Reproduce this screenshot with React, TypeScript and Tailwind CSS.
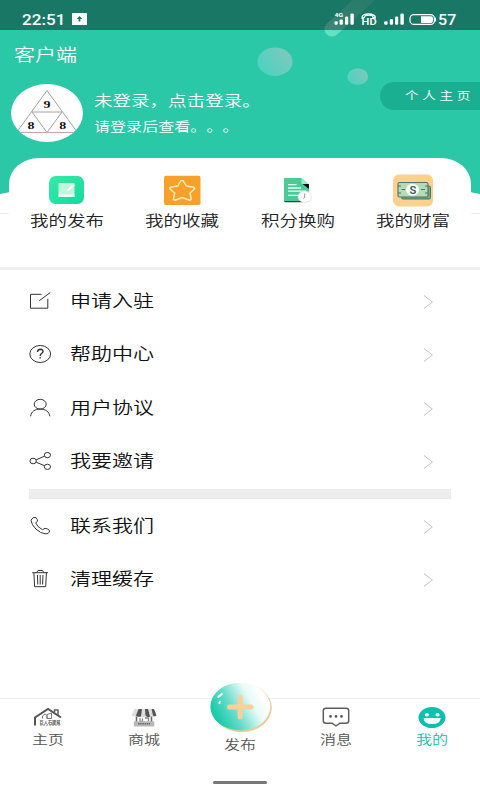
import React from "react";

interface Entry {
  name: string;
  icon: React.ReactNode;
}

function StatusBar() {
  return (
    <div className="relative flex h-[30px] items-center justify-between bg-black/40 pl-[22px] pr-[22px] pt-[8px] text-white">
      <div className="flex items-center">
        <span className="inline-block w-[50px]">
          <span className="relative -top-px inline-block origin-left scale-x-[1.22] font-[Roboto] text-[14px] font-medium leading-[20px]">22:51</span>
        </span>
        <svg width="15" height="12" viewBox="0 0 15 12">
          <rect width="15" height="12" rx="0.6" fill="#fff" />
          <path d="M7.5 3 L10.3 6 H8.4 V8.6 H6.6 V6 H4.7 Z" fill="#1b7864" />
        </svg>
      </div>
      <div className="flex items-center">
        <svg className="relative -top-px" width="104" height="16" viewBox="334 10 104 16" fill="#fff">
          <text x="334.5" y="17" fontSize="6" fontWeight="700" fontFamily="Roboto, sans-serif" textLength="8.5" lengthAdjust="spacingAndGlyphs">4G</text>
          <g>
            <rect x="334.5" y="21.2" width="3.2" height="3.6" rx="1.2" />
            <rect x="339.6" y="19.4" width="3.2" height="5.4" rx="1.2" />
            <rect x="345" y="16.6" width="3.2" height="8.2" rx="1.2" />
            <rect x="350.4" y="13.4" width="3.4" height="11.4" rx="1.2" />
          </g>
          <path d="M362 18 C361 12.4 376 12.4 375.4 18 L373 17.4 L372.6 15.8 C370 14.9 367.4 14.9 365 15.8 L364.4 17.4 Z" fill="none" stroke="#fff" strokeWidth="1.2" />
          <text x="361.6" y="25.2" fontSize="9" fontWeight="600" fontFamily="Roboto, sans-serif" textLength="15" lengthAdjust="spacingAndGlyphs">HD</text>
          <g>
            <rect x="384.2" y="21.2" width="3.4" height="3.6" rx="1.2" />
            <rect x="389.8" y="19" width="3.2" height="5.8" rx="1.2" />
            <rect x="395" y="16.6" width="3.2" height="8.2" rx="1.2" />
            <rect x="400.4" y="13.4" width="3.4" height="11.4" rx="1.2" />
          </g>
          <rect x="410" y="14.6" width="24.5" height="9.8" rx="4" fill="none" stroke="#fff" strokeWidth="1.2" />
          <path d="M421 16.2 H431 Q433.2 16.2 433.2 19.5 Q433.2 22.9 431 22.9 H421 Z" />
          <rect x="434.8" y="17.5" width="1.2" height="4" rx="0.6" />
        </svg>
        <span className="inline-block w-[20px]">
          <span className="relative -top-px inline-block origin-left scale-x-[1.15] font-[Roboto] text-[14px] font-medium leading-[20px]">57</span>
        </span>
      </div>
    </div>
  );
}

function Bubbles() {
  return (
    <svg className="absolute left-0 top-0" width="480" height="194" viewBox="0 0 480 194">
      <defs>
        <linearGradient id="bubble" x1="0" y1="0.8" x2="1" y2="0.2">
          <stop offset="0" stopColor="#48d3c3" />
          <stop offset="1" stopColor="#80c8ba" />
        </linearGradient>
        <linearGradient id="stripe" x1="0" y1="1" x2="1" y2="0">
          <stop offset="0" stopColor="#5fe3c3" />
          <stop offset="0.4" stopColor="#4ed1b5" />
          <stop offset="1" stopColor="#40ccb0" />
        </linearGradient>
      </defs>
      <path d="M332 29 L374 -9" stroke="url(#stripe)" strokeWidth="15" strokeLinecap="round" />
      <ellipse cx="275" cy="61.8" rx="17.5" ry="14.2" fill="url(#bubble)" />
      <ellipse cx="357.7" cy="76.7" rx="10.4" ry="8.3" fill="url(#bubble)" />
      <path d="M0 194 Q120 169 240 169 T480 194 Z" fill="#fff" />
    </svg>
  );
}

function Avatar() {
  return (
    <svg width="72" height="58" viewBox="0 0 72 58">
      <defs>
        <clipPath id="face">
          <ellipse cx="36" cy="29" rx="36" ry="29" />
        </clipPath>
      </defs>
      <g clipPath="url(#face)">
        <rect width="72" height="58" fill="#fff" />
        <path d="M36 6.5 L7 46.5 M36 6.5 L65 46.5 M21 28 H51 L36 48.5 Z" fill="none" stroke="#999" strokeWidth="0.9" />
        <path d="M5 48.5 H67" stroke="#bf9c98" strokeWidth="0.9" />
        <g fontFamily="Liberation Serif, serif" fontSize="11" fontWeight="700" fill="#111">
          <text x="32.5" y="24.3" textLength="7" lengthAdjust="spacingAndGlyphs">9</text>
          <text x="16.6" y="45" textLength="7" lengthAdjust="spacingAndGlyphs">8</text>
          <text x="48.2" y="45" textLength="7" lengthAdjust="spacingAndGlyphs">8</text>
        </g>
      </g>
    </svg>
  );
}

const shortcuts: Entry[] = [
  {
    name: "我的发布",
    icon: (
      <svg width="42" height="34" viewBox="0 0 42 34">
        <defs>
          <linearGradient id="note" x1="0" y1="0" x2="1" y2="1">
            <stop offset="0" stopColor="#37eaa9" />
            <stop offset="1" stopColor="#16d99d" />
          </linearGradient>
        </defs>
        <rect x="3" y="3" width="35" height="28" rx="6.5" fill="url(#note)" />
        <rect x="12.5" y="10" width="16" height="14" fill="#bdf8dc" />
        <path d="M12.5 21.5 H28.5 V24 H12.5 Z" fill="#e6fff4" />
        <path d="M21.5 16.3 L27 10.8 L29 12.6 L23.4 17.2 L20.8 18 Z" fill="#fff" />
      </svg>
    ),
  },
  {
    name: "我的收藏",
    icon: (
      <svg width="42" height="34" viewBox="0 0 42 34">
        <rect x="3" y="2.7" width="36.5" height="29.3" rx="2" fill="#f7a02a" />
        <path d="M21 7.4 Q22.3 7.4 23 9 L25.3 13 L31.5 13.9 Q35 14.6 32.8 16.5 L29 20 L30 25 Q30.2 28.2 27 26.8 L21.3 24.5 L15.4 26.8 Q12.2 28 12.6 25 L13.7 20 L9.7 16.6 Q7.5 14.6 10.7 14 L16.8 13 L19 9 Q19.7 7.4 21 7.4 Z" fill="none" stroke="#ffedc0" strokeWidth="1.5" strokeLinejoin="round" />
      </svg>
    ),
  },
  {
    name: "积分换购",
    icon: (
      <svg width="42" height="34" viewBox="0 0 42 34">
        <path d="M7 5 H24.5 L32 11.5 V29 H8.5 Q7 29 7 27.5 Z" fill="#4ccb98" />
        <path d="M24.5 5 V11 H31.5 Z" fill="#a5e8cb" />
        <path d="M25.5 11 H32 V16 Z" fill="#111" />
        <path d="M7 28 H26 V29.3 H8 Z" fill="#16513c" />
        <path d="M11 11.7 H19.5 M11 15 H24 M11 18.2 H29 M11 22.3 H22" stroke="#e9fff6" strokeWidth="1.3" />
        <ellipse cx="27.8" cy="23.7" rx="6.8" ry="5.7" fill="#fff" stroke="#ddd" strokeWidth="0.7" />
        <path d="M27.7 20.5 V24.5 L26.3 25.4" fill="none" stroke="#888" strokeWidth="0.9" />
      </svg>
    ),
  },
  {
    name: "我的财富",
    icon: (
      <svg width="42" height="34" viewBox="0 0 42 34">
        <rect x="1" y="1.5" width="40" height="32" rx="6" fill="#fdd08d" />
        <rect x="9.5" y="13" width="29" height="13" rx="1.5" fill="#6da98b" stroke="#4d7467" strokeWidth="1" />
        <rect x="6" y="9.5" width="30" height="14.5" rx="1.5" fill="#b4dbb5" stroke="#4d7467" strokeWidth="1.1" />
        <path d="M6 13 L9 13 M6 20 H9 M33 13 H36 M33 20 H36 M9.5 16.5 H13 M29 16.5 H33" stroke="#4d7467" strokeWidth="1.1" />
        <ellipse cx="20.5" cy="16.8" rx="6.5" ry="6" fill="#fff" />
        <text x="17.4" y="20.8" fontFamily="Roboto, sans-serif" fontSize="11" fontWeight="600" fill="#405a54" textLength="6.8" lengthAdjust="spacingAndGlyphs">S</text>
      </svg>
    ),
  },
];

const menu: Entry[] = [
  {
    name: "申请入驻",
    icon: <path d="M12.5 3.3 H1.5 V17.2 H18.8 V7.8 M10.2 9.8 L21.3 1.5" />,
  },
  {
    name: "帮助中心",
    icon: (
      <>
        <ellipse cx="11.2" cy="10" rx="10.4" ry="8.5" />
        <path d="M8.5 8 Q8.7 5.2 11.5 5.2 Q14.2 5.4 14 7.8 Q13.5 9.1 12.2 9.8 Q11.2 10.5 11.2 12 M11.2 13.2 V14.5" strokeWidth="1.4" />
      </>
    ),
  },
  {
    name: "用户协议",
    icon: (
      <>
        <ellipse cx="11.2" cy="6.2" rx="6" ry="4.9" />
        <path d="M1.6 18.3 C2.2 13.4 6 11.1 11.2 11.1 S20.2 13.4 20.8 18.3" />
      </>
    ),
  },
  {
    name: "我要邀请",
    icon: (
      <>
        <ellipse cx="4.1" cy="10" rx="3.2" ry="2.8" />
        <ellipse cx="18.4" cy="4.1" rx="3.1" ry="2.6" />
        <ellipse cx="18.4" cy="15.8" rx="3.1" ry="2.6" />
        <path d="M7.2 8.8 L15.5 5.2 M7.2 11.2 L15.5 14.7" />
      </>
    ),
  },
];

const moreMenu: Entry[] = [
  {
    name: "联系我们",
    icon: (
      <path d="M2 4.2 Q3.7 0.4 7 1.6 Q9 4 8.4 5.1 L6.7 7 Q8.5 11.3 13.5 13.7 L16 12.3 Q18.8 12.6 20.6 14.5 Q20.3 18.2 16 17.8 Q11.5 17.3 7.1 13.2 Q2.4 8.7 2 4.2 Z" />
    ),
  },
  {
    name: "清理缓存",
    icon: (
      <path d="M3.2 3.7 H19 M7.7 3.7 L9 1.5 H13.5 L14.8 3.7 M4.9 4 L5.6 17.7 H16.7 L17.4 4 M8.4 6 L8.8 15.5 M11.2 6 V15.5 M14 6 L13.6 15.5" />
    ),
  },
];

function MenuRow({ item }: { item: Entry }) {
  return (
    <li className="flex h-[53.5px] items-center pl-[29px] pr-[46px]">
      <svg width="24" height="20" viewBox="0 0 24 20" fill="none" stroke="#333" strokeWidth="1">
        {item.icon}
      </svg>
      <span className="relative -top-px ml-[17px] inline-block origin-left scale-x-[1.235] text-[17px] leading-[24px] text-[#111]">{item.name}</span>
      <svg className="relative top-px ml-auto" width="11" height="16" viewBox="0 0 11 16" fill="none" stroke="#c4c4c4" strokeWidth="1">
        <path d="M1 1.5 L9.3 8 L1 14.5" />
      </svg>
    </li>
  );
}

const tabs: Entry[] = [
  {
    name: "主页",
    icon: (
      <svg className="overflow-visible" width="30" height="20" viewBox="0 0 30 20" fill="none">
        <path d="M2 18.5 V10.5 L15 2 L28 10.5" stroke="#555" strokeWidth="2" />
        <path d="M21.5 5.5 V3 H25 V8" stroke="#666" strokeWidth="1.6" />
        <path d="M9.5 11.5 V9 L12 7 L14 8.5 V11.5 M14 11.5 V7.5 L18.5 6 V11.5 Z" stroke="#777" strokeWidth="1" />
        <text x="6.5" y="16.5" fontSize="4.5" fontWeight="700" fill="#555" textLength="21" lengthAdjust="spacingAndGlyphs">巨人石建筑</text>
        <path d="M7 18.3 H27" stroke="#999" strokeWidth="0.8" strokeDasharray="2 1" />
      </svg>
    ),
  },
  {
    name: "商城",
    icon: (
      <svg width="30" height="20" viewBox="0 0 30 20">
        <path d="M5.5 2 H25 L27.5 9 Q25.5 11 23 9.5 Q20 11.5 17 9.5 Q14 11.5 11 9.5 Q8 11.5 5.5 9 Q3 10 2.5 8 Z" fill="#ddd" />
        <path d="M9.5 2 H13 L12 9.5 Q9 10.5 7 8.5 Z M16 2 H19 L21 9.5 Q18.5 11 16.5 8.5 Z M22.5 2 H25 L27.5 8.5 Q25.5 10 24 8.5 Z" fill="#555" />
        <path d="M7.5 9.5 V15 M22.5 9.5 V15" stroke="#666" strokeWidth="1.5" />
        <path d="M11 11 V14.5 H13.5 V11.5 M16 11 H19.5 V14.5" fill="none" stroke="#888" strokeWidth="1.3" />
        <rect x="4.8" y="14.2" width="20.5" height="5.2" rx="1" fill="#b8b8b8" />
        <path d="M9 16.7 H21" stroke="#666" strokeWidth="1.5" strokeDasharray="1.5 0.7" />
      </svg>
    ),
  },
  {
    name: "发布",
    icon: (
      <svg width="64" height="52" viewBox="0 0 64 52">
        <defs>
          <linearGradient id="publish" x1="0.1" y1="0.7" x2="0.9" y2="0.35">
            <stop offset="0" stopColor="#1bcba9" />
            <stop offset="0.35" stopColor="#66dcca" />
            <stop offset="0.75" stopColor="#e8faf7" />
            <stop offset="1" stopColor="#fff" />
          </linearGradient>
        </defs>
        <ellipse cx="33.8" cy="25.8" rx="30" ry="24.2" fill="#eccb99" />
        <ellipse cx="32.3" cy="24.6" rx="30" ry="23.8" fill="url(#publish)" />
        <path d="M21.5 25 H43 M32.2 15.5 V35" stroke="#fbd096" strokeWidth="5" strokeLinecap="round" />
        <path d="M10.4 14.8 L13.8 12 M11.4 21 L11.8 19.8" stroke="#fff" strokeWidth="2.2" strokeLinecap="round" />
      </svg>
    ),
  },
  {
    name: "消息",
    icon: (
      <svg width="30" height="20" viewBox="0 0 30 20">
        <path d="M5 1.2 H25 Q27.7 1.2 27.7 3.5 V14 Q27.7 16.2 25 16.2 H19 L15 19 L11 16.2 H5 Q2.3 16.2 2.3 14 V3.5 Q2.3 1.2 5 1.2 Z" fill="none" stroke="#5d5d5d" strokeWidth="1.5" strokeLinejoin="round" />
        <g fill="#555">
          <circle cx="9.5" cy="9.4" r="1.3" />
          <circle cx="15" cy="9.4" r="1.3" />
          <circle cx="20.5" cy="9.4" r="1.3" />
        </g>
      </svg>
    ),
  },
  {
    name: "我的",
    icon: (
      <svg width="30" height="22" viewBox="0 0 30 22">
        <ellipse cx="15" cy="10.6" rx="13.5" ry="10.5" fill="#0fbfae" />
        <ellipse cx="9.8" cy="7.7" rx="2.1" ry="1.8" fill="#fff" />
        <ellipse cx="20.5" cy="7.7" rx="2.1" ry="1.8" fill="#fff" />
        <path d="M6.5 10.9 H23.8 Q23 17.1 15.1 17.1 Q7.4 17.1 6.5 10.9 Z" fill="#fff" />
      </svg>
    ),
  },
];

export default function App() {
  return (
    <div className="flex h-[800px] w-[480px] flex-col overflow-hidden bg-white font-['Noto_Sans_CJK_SC',sans-serif] font-[350] [text-spacing-trim:space-all]">
      {/* header */}
      <header className="relative h-[194px] shrink-0 overflow-hidden bg-[#2bc8a8]">
        <Bubbles />
        <StatusBar />
        <div className="relative flex h-[48px] items-center pl-[14px] text-white">
          <h1 className="origin-left scale-x-[1.235] text-[17px] font-[350] leading-[24px]">客户端</h1>
        </div>
        <div className="relative flex pl-[11px] pt-[6px] text-white">
          <Avatar />
          <div className="ml-[11px] flex flex-col items-start pt-[5px]">
            <span className="origin-left scale-x-[1.235] text-[15px] leading-[22px]">未登录，点击登录。</span>
            <span className="mt-[5px] origin-left scale-x-[1.235] text-[13px] leading-[20px]">请登录后查看。。。</span>
          </div>
          <button className="ml-auto -mt-[2px] h-[28px] w-[100px] rounded-l-full bg-[#1baf92] pl-[25px] text-left text-[11px] leading-[26px] tracking-[3px]">
            <span className="relative -top-px inline-block origin-left scale-x-[1.235]">个人主页</span>
          </button>
        </div>
      </header>

      {/* shortcuts */}
      <div className="h-[20px] shrink-0 border-b border-[#ececec]" />
      <section className="relative mx-[9px] -mt-[56px] grid h-[109px] shrink-0 grid-cols-4 rounded-t-[30px_26px] bg-white pt-[15px]">
        {shortcuts.map((item) => (
          <div key={item.name} className="flex flex-col items-center">
            {item.icon}
            <span className="mt-px scale-x-[1.235] whitespace-nowrap text-[15px] leading-[24px] text-[#222]">{item.name}</span>
          </div>
        ))}
      </section>
      <div className="h-[3px] shrink-0 bg-[#f0f0f0]" />

      {/* menu */}
      <main className="flex-1 pt-[4px]">
        <ul>
          {menu.map((item) => (
            <MenuRow key={item.name} item={item} />
          ))}
        </ul>
        <div className="mx-[29px] mt-[0.5px] h-[10.5px] bg-[#ededed]" />
        <ul>
          {moreMenu.map((item) => (
            <MenuRow key={item.name} item={item} />
          ))}
        </ul>
      </main>

      {/* tab bar */}
      <nav className="grid h-[83px] shrink-0 grid-cols-5 border-t border-[#eee]">
        {tabs.map((tab) => (
          <div key={tab.name} className={tab.name === "发布" ? "-mt-[17px] flex flex-col items-center" : "flex flex-col items-center pt-[8px]"}>
            <div className={tab.name === "发布" ? "h-[51px]" : "h-[21px]"}>{tab.icon}</div>
            <span
              className={
                tab.name === "我的"
                  ? "scale-x-[1.235] text-[13px] leading-[21px] text-[#0fbfae]"
                  : "scale-x-[1.235] text-[13px] leading-[21px] text-[#555]"
              }
            >
              {tab.name}
            </span>
          </div>
        ))}
      </nav>
      <div className="mx-auto mb-[16px] h-[3px] w-[54px] shrink-0 rounded-full bg-[#777]" />
    </div>
  );
}
